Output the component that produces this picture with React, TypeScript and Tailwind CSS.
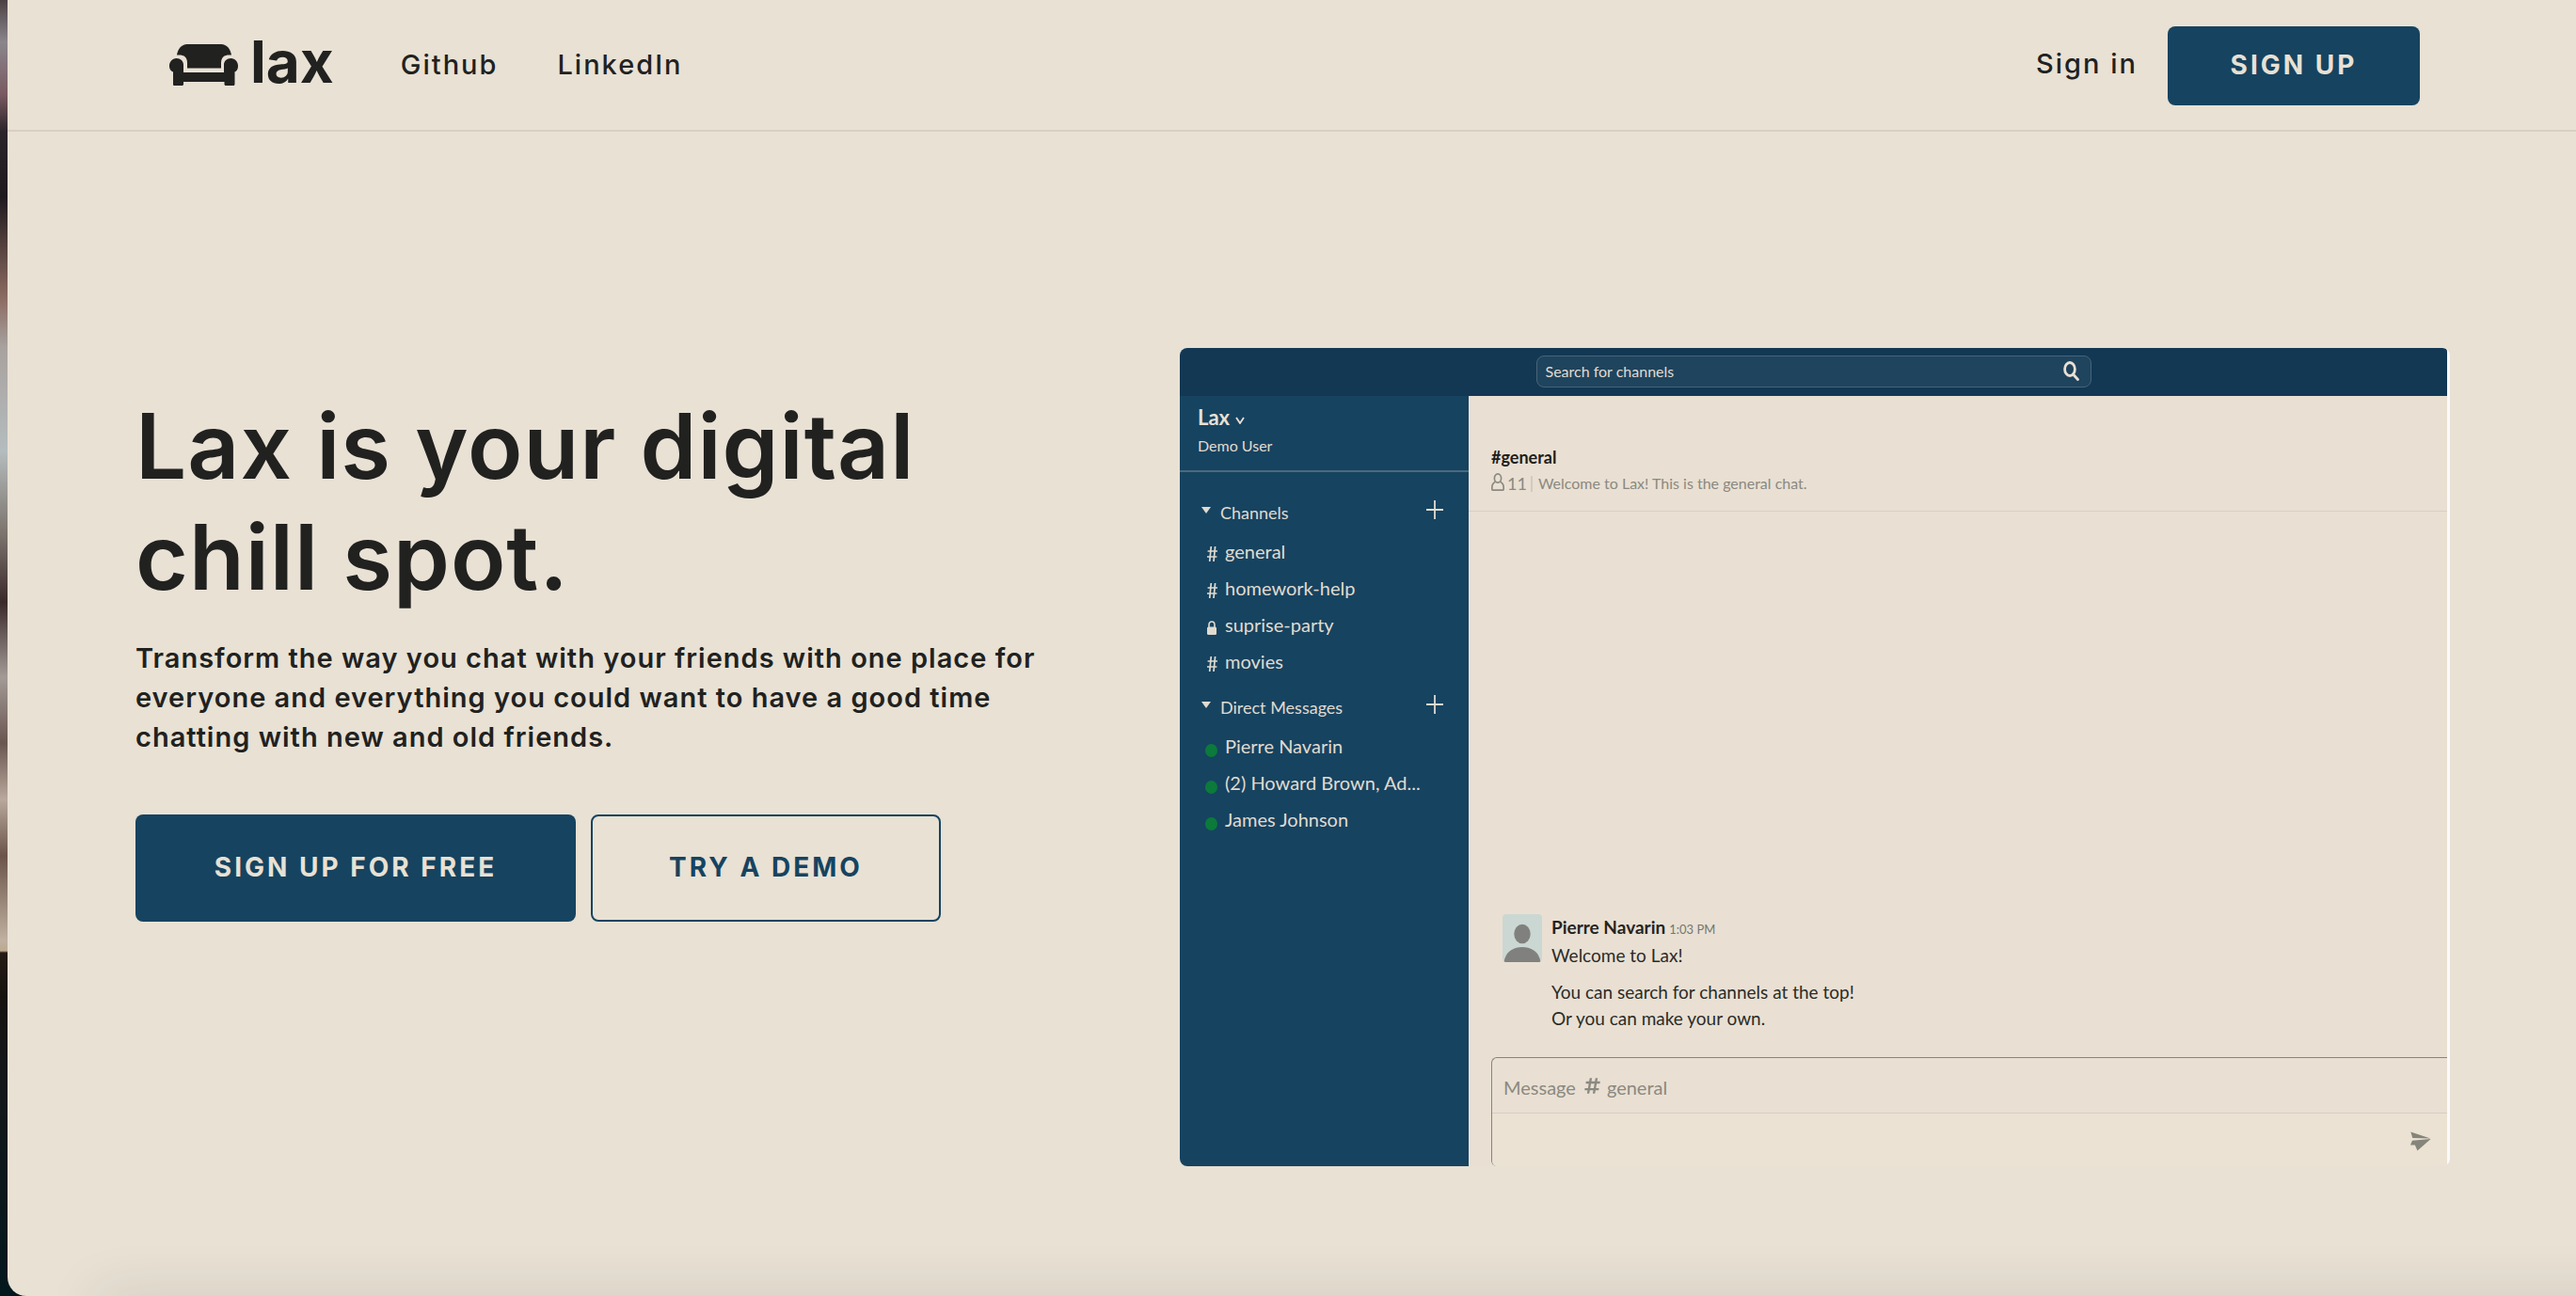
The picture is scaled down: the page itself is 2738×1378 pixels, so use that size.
import React from "react";
import { FaHashtag } from "react-icons/fa";

function SofaLogo() {
  return (
    <svg viewBox="0 0 73 44" className="h-11 w-[73px]" fill="currentColor" aria-hidden="true">
      <path d="M19 0H55C61 0 65 5 66 11.5H64C58 11.5 55 14 55 20V25.5H19V20C19 14 16 11.5 10 11.5H8C9 5 13 0 19 0Z" />
      <path d="M7.5 15C12 15 15 18 15 22V30H58V22C58 18 61 15 65.5 15C70 15 73 19 73 23C73 27 71.5 28.5 69.5 29.5V42C69.5 43.5 69 44 68 44H60.5C59.5 44 58.5 43.5 58.5 42.5V40H15V42.5C15 43.5 14 44 13 44H5.5C4.5 44 4 43.5 4 42.5V29.5C2 28.5 0 27 0 23C0 19 3 15 7.5 15Z" />
    </svg>
  );
}

function Plus() {
  return (
    <svg viewBox="0 0 18 20" className="h-5 w-[18px]" stroke="currentColor" strokeWidth="1.8" aria-hidden="true">
      <path d="M9 0V20M0 10H18" />
    </svg>
  );
}

const channels = [
  { name: "general", locked: false },
  { name: "homework-help", locked: false },
  { name: "suprise-party", locked: true },
  { name: "movies", locked: false },
];

const directMessages = ["Pierre Navarin", "(2) Howard Brown, Ad...", "James Johnson"];

function SectionTitle({ title }: { title: string }) {
  return (
    <div className="flex h-7 items-center pl-[23px] pr-[27px]">
      <svg viewBox="0 0 10 7" className="mb-1.5 h-[7px] w-[10px]" fill="currentColor" aria-hidden="true">
        <path d="M0 0H10L5 7Z" />
      </svg>
      <h3 className="ml-[10px] flex-1 text-[18px] leading-7">{title}</h3>
      <button type="button" aria-label={"Add to " + title} className="mb-1.5">
        <Plus />
      </button>
    </div>
  );
}

function Sidebar() {
  return (
    <aside className="w-[307px] shrink-0 bg-[#164360] text-[#e0dbd0]">
      <div className="h-[81px] border-b-2 border-[#4a6a7e] px-[19px] pt-[9px]">
        <div className="flex items-center gap-1.5 text-[22px] font-bold leading-7 text-[#e9e0d3]">
          Lax
          <svg viewBox="0 0 10 8" className="mt-1.5 h-2 w-[10px]" fill="none" stroke="currentColor" strokeWidth="1.8" aria-hidden="true">
            <path d="M1 1L5 7L9 1" />
          </svg>
        </div>
        <p className="mt-1 text-[16px] leading-6">Demo User</p>
      </div>
      <div className="pt-[29px]">
        <SectionTitle title="Channels" />
        <ul className="mt-[7px]">
          {channels.map((c) => (
            <li key={c.name}>
              <a href="#channel" className="flex h-[39px] items-center pl-7 text-[20px]">
                <span className="flex w-3 justify-center">
                  {c.locked ? (
                    <svg viewBox="0 0 10 15" className="mt-2 h-[15px] w-[10px]" aria-hidden="true">
                      <path d="M2 8V4.5C2 2.5 3 1 5 1S8 2.5 8 4.5V8" fill="none" stroke="currentColor" strokeWidth="1.6" />
                      <rect x="0" y="6.5" width="10" height="8.5" rx="1.5" fill="currentColor" />
                    </svg>
                  ) : (
                    <svg viewBox="0 0 11 16" className="mt-1.5 h-4 w-[11px]" stroke="currentColor" strokeWidth="1.7" aria-hidden="true">
                      <path d="M4.3 0L2.7 16M8.6 0L7 16M0.6 5H11M0 11H10.4" />
                    </svg>
                  )}
                </span>
                <span className="ml-2">{c.name}</span>
              </a>
            </li>
          ))}
        </ul>
        <div className="mt-4">
          <SectionTitle title="Direct Messages" />
        </div>
        <ul className="mt-[7px]">
          {directMessages.map((name) => (
            <li key={name}>
              <a href="#dm" className="flex h-[39px] items-center pl-[27px] text-[20px]">
                <span className="mt-[10px] h-[14px] w-[13px] rounded-[50%] bg-[#0b7a3b]" />
                <span className="ml-2">{name}</span>
              </a>
            </li>
          ))}
        </ul>
      </div>
    </aside>
  );
}

function Conversation() {
  return (
    <section className="flex min-w-0 flex-1 flex-col bg-[#e9e0d3] text-[#2b2b28]">
      <header className="h-[123px] border-b border-[#d9d0c4] pl-6 pt-[53px]">
        <h3 className="text-[18px] font-bold leading-6 text-[#1d1d1b]">#general</h3>
        <div className="mt-1 flex items-center text-[16px] leading-6 text-[#8b8980]">
          <svg viewBox="0 0 14 19" className="mb-1 h-[19px] w-[14px]" fill="none" stroke="currentColor" strokeWidth="1.7" aria-hidden="true">
            <ellipse cx="7" cy="5.5" rx="3.6" ry="4.6" />
            <path d="M4.2 9.5C2 10.5 0.8 12.5 0.8 15.5V17C0.8 18 1.2 18.2 2 18.2H12C12.8 18.2 13.2 18 13.2 17V15.5C13.2 12.5 12 10.5 9.8 9.5" />
          </svg>
          <span className="ml-[3px] text-[18px]">11</span>
          <span className="ml-1 h-[17px] w-0.5 bg-[#d3cbbf]" />
          <p className="ml-1.5">Welcome to Lax! This is the general chat.</p>
        </div>
      </header>

      <div className="flex flex-1 flex-col justify-end pb-[27px] pl-9">
        <article className="flex gap-[10px]">
          <svg viewBox="0 0 42 51" className="mt-px h-[51px] w-[42px] rounded" aria-hidden="true">
            <rect width="42" height="51" fill="#cbd7d2" />
            <ellipse cx="21" cy="21" rx="8.7" ry="10.3" fill="#80817e" />
            <path d="M1.5 51C3 41 10 35 21 35S39 41 40.500 51Z" fill="#80817e" />
          </svg>
          <div className="text-[19px] leading-7">
            <div className="flex items-baseline gap-1 pt-px">
              <strong className="font-bold text-[#242422]">Pierre Navarin</strong>
              <time className="text-[13px] text-[#77756e]">1:03 PM</time>
            </div>
            <p>Welcome to Lax!</p>
            <p className="mt-[11px]">You can search for channels at the top!</p>
            <p>Or you can make your own.</p>
          </div>
        </article>
      </div>

      <form className="ml-6 overflow-hidden rounded-l-md border-l border-t border-[#85867d]" onSubmit={(e) => e.preventDefault()}>
        <div className="flex h-[59px] items-center border-b border-[#d9ccc3] pl-3 pt-1 text-[20px] text-[#8b8980]">
          <label htmlFor="message" className="flex items-center gap-1.5">
            Message
            <FaHashtag className="mb-1 ml-0.5 size-[19px]" aria-hidden="true" />
            general
          </label>
          <input id="message" type="text" className="ml-2 min-w-0 flex-1 bg-transparent outline-none" />
        </div>
        <div className="flex h-14 items-center justify-end bg-[#ebe2d3] pr-[17px] pt-0.5">
          <button type="submit" aria-label="Send" className="text-[#85857b]">
            <svg viewBox="484 372 68 64" className="h-[21px] w-[22px]" fill="currentColor" aria-hidden="true">
              <path d="M485 373L550 395L491 393Z" />
              <path d="M551 396L507 435L499 416L484 416L490 402Z" />
            </svg>
          </button>
        </div>
      </form>
    </section>
  );
}

function ProductPreview() {
  return (
    <div className="flex aspect-[1350/870] flex-col overflow-hidden rounded-lg bg-[#fafafa] pr-[3px] font-['Lato',sans-serif]">
      <div className="flex h-[51px] shrink-0 items-center justify-center rounded-tr bg-[#123854] pb-0.5">
        <div className="flex h-[34px] w-[590px] items-center rounded-lg border border-[#48647a] bg-[#1f445d] pl-[9px] pr-3">
          <input
            type="search"
            aria-label="Search for channels"
            placeholder="Search for channels"
            className="min-w-0 flex-1 bg-transparent text-[16px] text-[#e9e0d3] outline-none placeholder:text-[#e0dbd0]"
          />
          <svg viewBox="0 0 17 21" className="h-[21px] w-[17px] text-[#e9e0d3]" fill="none" stroke="currentColor" strokeWidth="2.8" aria-hidden="true">
            <ellipse cx="7" cy="8.500" rx="5.4" ry="7" />
            <path d="M10.500 14L15.500 19.500" strokeLinecap="round" />
          </svg>
        </div>
      </div>
      <div className="flex min-h-0 flex-1">
        <Sidebar />
        <Conversation />
      </div>
    </div>
  );
}

export default function App() {
  return (
    <div className="flex min-h-screen bg-[linear-gradient(to_bottom,#4b4143_0px,#8a868b_45px,#7a5a62_100px,#2b2529_140px,#1f1a1e_210px,#8a6a60_315px,#a8a29f_370px,#b5bcbd_480px,#7a716a_570px,#3a2a2a_640px,#a39a96_720px,#6a5650_790px,#b9a89d_850px,#6b544a_910px,#c0b0a0_1000px,#bda98f_1011px,#241a15_1013px,#16130f_1060px,#14171a_1140px,#03181d_1378px)] pl-2 font-['Inter',sans-serif] text-[#212120]">
      <div className="relative flex-1 overflow-hidden rounded-bl-[20px] bg-[#e8e1d4]">
        <header className="flex h-[140px] items-center justify-between border-b-2 border-[#d9cfc3] pl-[172px] pr-[166px]">
          <nav className="flex items-center text-[29px] font-medium tracking-[2px]">
            <a href="#home" className="flex items-center gap-[13px]">
              <SofaLogo />
              <span className="pb-1.5 text-[62px] font-bold leading-none tracking-normal">lax</span>
            </a>
            <a href="#github" className="ml-[71px]">Github</a>
            <a href="#linkedin" className="ml-[63px]">LinkedIn</a>
          </nav>
          <div className="flex items-center gap-8 pt-0.5 text-[28px] tracking-[2px]">
            <a href="#signin" className="pb-1 text-[29px] font-medium">Sign in</a>
            <button type="button" className="h-[84px] w-[268px] rounded-lg bg-[#164360] pb-0.5 font-bold tracking-[3px] text-[#e8e1d4]">
              SIGN UP
            </button>
          </div>
        </header>

        <main className="grid grid-cols-[1110fr_1350fr] items-start pb-[138px] pl-[136px] pr-[134px] pt-[230px]">
          <section className="pt-[45px]">
            <h1 className="max-w-[960px] text-[96px] font-semibold leading-[118px] tracking-[1px]">
              Lax is your digital chill spot.
            </h1>
            <p className="mt-7 max-w-[990px] text-[29px] font-semibold leading-[42px] tracking-[1px]">
              Transform the way you chat with your friends with one place for everyone and everything you could want to
              have a good time chatting with new and old friends.
            </p>
            <div className="mt-[61px] flex gap-4 text-[28px] font-bold tracking-[3px]">
              <button type="button" className="h-[114px] w-[468px] rounded-lg bg-[#164360] pb-0.5 text-[#e8e1d4]">
                SIGN UP FOR FREE
              </button>
              <button type="button" className="h-[114px] w-[372px] rounded-lg border-2 border-[#164360] pb-0.5 text-[#164360]">
                TRY A DEMO
              </button>
            </div>
          </section>
          <ProductPreview />
        </main>
        <div className="pointer-events-none absolute -right-24 left-24 top-full h-10 shadow-[0_0_60px_rgba(60,50,40,0.14)]" />
      </div>
    </div>
  );
}
